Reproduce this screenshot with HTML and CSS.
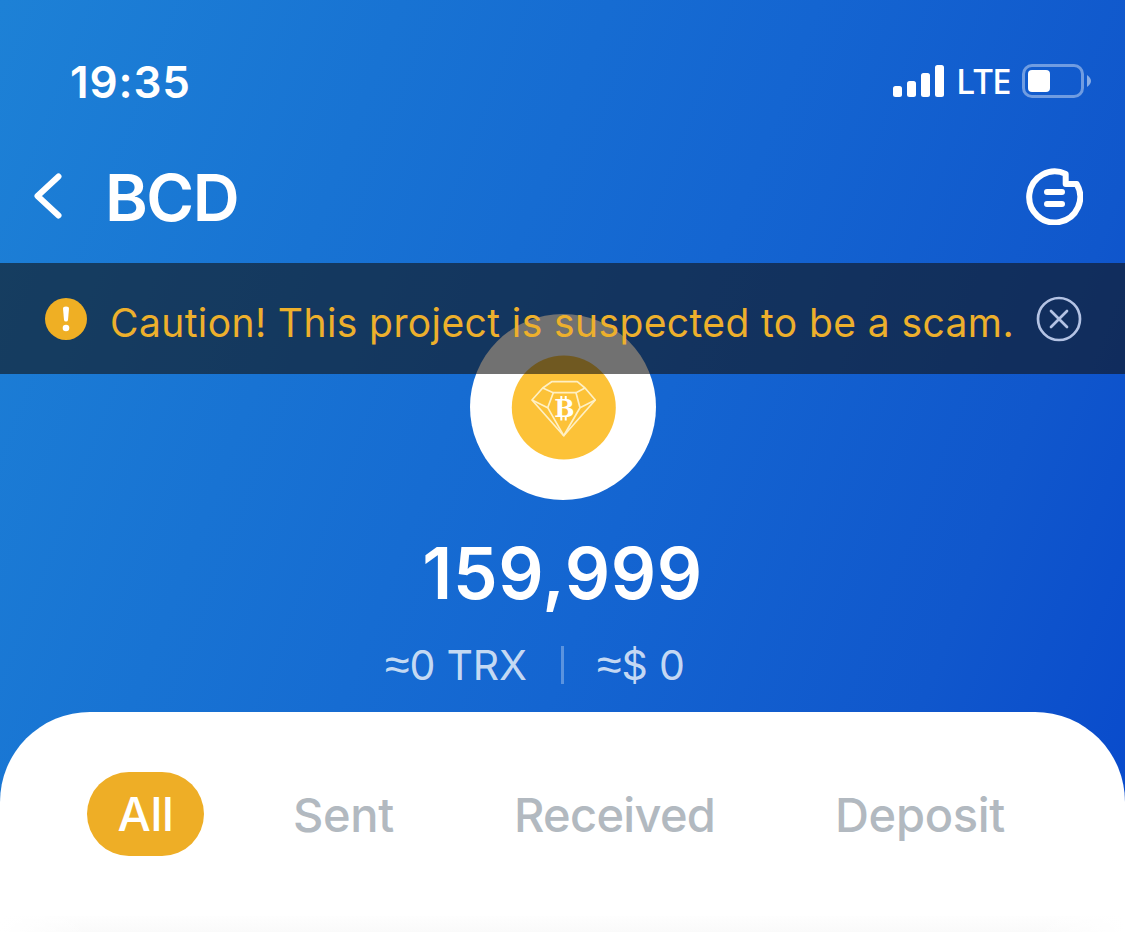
FILE: index.html
```
<!DOCTYPE html>
<html lang="en">
<head>
    <meta charset="UTF-8">
    <meta name="viewport" content="width=device-width, initial-scale=1.0">
    <title>BCD</title>
    <link rel="stylesheet" href="styles.css">
</head>
<body>
    <div class="screen">
        <!-- Status bar -->
        <div class="status-bar">
            <span class="time">19:35</span>
            <div class="status-icons">
                <svg class="signal" width="51" height="32" viewBox="0 0 51 32" fill="#fff">
                    <rect x="0" y="21" width="9" height="11" rx="2.5"/>
                    <rect x="14" y="16" width="9" height="16" rx="2.5"/>
                    <rect x="28" y="8" width="9" height="24" rx="2.5"/>
                    <rect x="42" y="0" width="9" height="32" rx="2.5"/>
                </svg>
                <span class="network">LTE</span>
                <svg class="battery" width="70" height="34" viewBox="0 0 70 34">
                    <rect x="1.5" y="1.5" width="59" height="31" rx="8.5" fill="none" stroke="#fff" stroke-opacity=".4" stroke-width="3"/>
                    <rect x="6" y="6" width="22" height="22" rx="4" fill="#fff"/>
                    <path d="M65 11 Q69 14 69 17 Q69 20 65 23 Z" fill="#fff" fill-opacity=".5"/>
                </svg>
            </div>
        </div>

        <!-- Title -->
        <div class="nav-bar">
            <svg class="back" width="28" height="46" viewBox="0 0 28 46" fill="none" stroke="#fff" stroke-width="6" stroke-linecap="round" stroke-linejoin="round">
                <path d="M24.5 3.5 L3.5 23 L24.5 42.5"/>
            </svg>
            <h1>BCD</h1>
            <svg class="note" width="57" height="57" viewBox="0 0 57 57" fill="none" stroke="#fff" stroke-width="6" stroke-linecap="round" stroke-linejoin="round">
                <path d="M39.7 5.9 V16 H50.7 A25.5 25.5 0 1 1 39.7 5.9 Z"/>
                <path d="M21 24 H36 M21 36 H36"/>
            </svg>
        </div>

        <!-- Warning -->
        <div class="warning">
            <svg class="alert" width="42" height="42" viewBox="0 0 42 42">
                <circle cx="21" cy="21" r="21" fill="#efaf24"/>
                <path d="M18 10.5 Q18 8.5 21 8.5 Q24 8.5 24 10.5 L23 22 Q22.8 23.5 21 23.5 Q19.2 23.5 19 22 Z" fill="#fff"/>
                <circle cx="21" cy="30" r="3.3" fill="#fff"/>
            </svg>
            <p>Caution! This project is suspected to be a scam.</p>
            <svg class="close" width="46" height="46" viewBox="0 0 46 46" fill="none" stroke="#b4c3e4" stroke-width="2.7" stroke-linecap="round">
                <circle cx="23" cy="23" r="21"/>
                <path d="M15 15 L31 31 M31 15 L15 31"/>
            </svg>
        </div>

        <!-- Token balance -->
        <div class="balance">
            <svg class="coin" width="186" height="186" viewBox="0 0 186 186">
                <circle cx="93" cy="93" r="93" fill="#fff"/>
                <circle cx="93.8" cy="93.5" r="52" fill="#fcc238"/>
                <g fill="none" stroke="#fff0c4" stroke-width="1.7" stroke-linejoin="round">
                    <path d="M81.7 67.7 H107.3 L115 74 L125.3 86 L93.7 121.7 L62 86 L72.7 74 Z"/>
                    <path d="M72.7 74 L83.3 78.7 H106 L115 74"/>
                    <path d="M83.3 78.7 L77.7 93.7 M106 78.7 L110 93.7"/>
                    <path d="M62 86 L77.7 93.7 L93.7 121.7 L110 93.7 L125.3 86"/>
                </g>
                <path d="M91.3 82 V86 M95.7 82 V86 M91.3 102.5 V106.5 M95.7 102.5 V106.5" stroke="#fff" stroke-width="2"/>
                <text class="coin-letter" x="94.5" y="102.8" text-anchor="middle">B</text>
            </svg>
            <div class="amount">159,999</div>
            <div class="values">
                <span class="trx"><span class="approx">≈</span>0 TRX</span>
                <span class="divider"></span>
                <span class="usd"><span class="approx">≈</span>$ 0</span>
            </div>
        </div>

        <!-- Transactions -->
        <div class="card">
            <div class="tabs">
                <span class="tab active">All</span>
                <span class="tab sent">Sent</span>
                <span class="tab received">Received</span>
                <span class="tab deposit">Deposit</span>
            </div>
            <div class="list-edge"></div>
        </div>
    </div>
</body>
</html>
```
FILE: styles.css
```
body {
    font-family: 'Inter', sans-serif;
    margin: 0;
    padding: 0;
    color: #fff;
}

.screen {
    height: 932px;
    overflow: hidden;
    display: flex;
    flex-direction: column;
    background: linear-gradient(111deg, #1d81d6 0%, #1873d3 28%, #1465d1 57%, #1057cc 83%, #094bcc 100%) 0 0 / 100% 810px no-repeat;
}

.status-bar {
    height: 162px;
    box-sizing: border-box;
    padding: 0 33px 0 70px;
    display: flex;
    align-items: center;
    justify-content: space-between;
}

.time {
    font-size: 44px;
    font-weight: 600;
    line-height: 1;
    letter-spacing: 0.9px;
    margin-top: 1px;
}

.status-icons {
    display: flex;
    align-items: center;
}

.network {
    font-family: 'Noto Sans', sans-serif;
    font-size: 35px;
    font-weight: 500;
    line-height: 1;
    letter-spacing: -0.8px;
    width: 66px;
    margin: 0 0 1px 12px;
}

.nav-bar {
    height: 68px;
    padding: 0 42px 33px 34px;
    display: flex;
    align-items: center;
}

h1 {
    font-size: 65px;
    font-weight: 600;
    line-height: 1;
    letter-spacing: -1.5px;
    margin: 2px auto 0 43px;
}

.warning {
    height: 111px;
    flex: none;
    box-sizing: border-box;
    padding: 0 43px 0 45px;
    display: flex;
    align-items: center;
    position: relative;
    z-index: 1;
    background-color: rgba(18, 18, 18, 0.6);
}

.warning p {
    color: #edb02c;
    font-size: 39px;
    font-weight: 400;
    line-height: 1;
    letter-spacing: 0.4px;
    white-space: nowrap;
    margin: 7px auto 0 23px;
}

.balance {
    height: 398px;
    flex: none;
    margin-top: -60px;
    display: flex;
    flex-direction: column;
    align-items: center;
}

.coin {
    flex: none;
}

.coin-letter {
    font-family: 'DejaVu Serif', serif;
    font-size: 24px;
    font-weight: bold;
    fill: #fff;
}

.amount {
    font-size: 71px;
    font-weight: 600;
    line-height: 1;
    letter-spacing: 0.6px;
    margin-top: 38px;
}

.values {
    width: 100%;
    margin-top: 33px;
    display: flex;
    align-items: center;
    color: rgba(255, 255, 255, 0.77);
    font-size: 41px;
    font-weight: 400;
    line-height: 1;
    letter-spacing: -0.2px;
    white-space: nowrap;
}

.approx {
    font-family: 'Liberation Sans', sans-serif;
    font-size: 45px;
}

.trx {
    width: 176px;
    margin-left: 385px;
}

.divider {
    width: 3px;
    height: 38px;
    background-color: rgba(255, 255, 255, 0.3);
}

.usd {
    margin-left: 33px;
}

.card {
    flex: 1;
    background-color: #fff;
    border-radius: 90px 90px 0 0;
    padding-top: 60px;
    display: flex;
    flex-direction: column;
    justify-content: space-between;
}

.tabs {
    display: flex;
    align-items: center;
    padding-left: 87px;
    color: #b2b9c0;
    font-size: 47px;
    font-weight: 500;
    line-height: 1;
    letter-spacing: -0.3px;
}

.active {
    width: 117px;
    height: 84px;
    line-height: 84px;
    text-align: center;
    color: #fff;
    background-color: #eeae26;
    border-radius: 42px;
}

.sent {
    width: 221px;
    margin-left: 89px;
}

.received {
    width: 321px;
    letter-spacing: -0.7px;
}

.list-edge {
    height: 16px;
    background: linear-gradient(90deg, #fff, transparent 8%, transparent 92%, #fff), linear-gradient(#fefefe, #fafafa);
}
```
